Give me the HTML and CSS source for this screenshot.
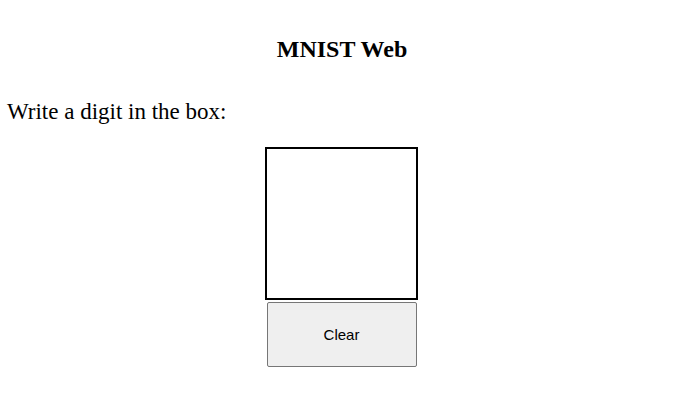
FILE: index.html
```html
<!DOCTYPE html>
<html lang="en">
<head>
<meta charset="utf-8">
<title>MNIST Web</title>
<link rel="stylesheet" href="styles.css">
</head>
<body>
<h1 class="title">MNIST Web</h1>
<p class="prompt">Write a digit in the box:</p>
<div class="pad">
  <canvas class="board" width="149" height="149"></canvas>
  <button class="clear" type="button">Clear</button>
</div>
</body>
</html>
```
FILE: styles.css
```css
html, body {
  margin: 0;
  padding: 0;
  background: #fff;
}
body {
  font-family: "Liberation Serif", "Times New Roman", serif;
  color: #000;
  padding-top: 37px;
}
.title {
  margin: 0;
  font-size: 24px;
  line-height: 24px;
  font-weight: bold;
  text-align: center;
  padding-left: 1px;
}
.prompt {
  margin: 40px 0 0 0;
  padding-left: 7px;
  font-size: 23px;
  line-height: 22px;
}
.pad {
  margin-top: 24px;
  padding-right: 1px;
  display: flex;
  flex-direction: column;
  align-items: center;
}
.board {
  display: block;
  width: 149px;
  height: 149px;
  border: 2px solid #000;
  background: #fff;
}
.clear {
  margin: 2px 0 0 1px;
  width: 150px;
  height: 65px;
  background: #efefef;
  border: 1px solid #767676;
  border-radius: 2px;
  font-family: "Liberation Sans", Arial, sans-serif;
  font-size: 15px;
  color: #000;
  padding: 0;
}
```
